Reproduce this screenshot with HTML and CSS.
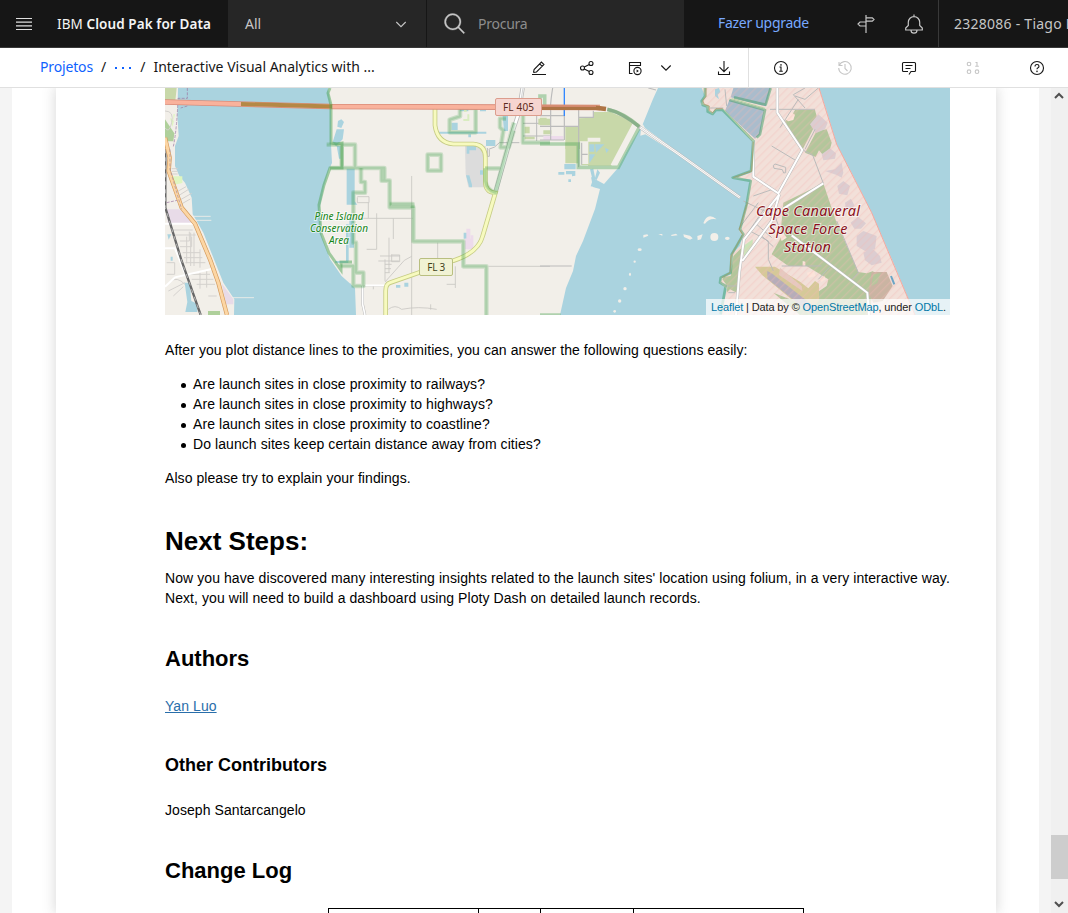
FILE: index.html
```html
<!DOCTYPE html>
<html lang="pt">
<head>
<meta charset="utf-8">
<title>IBM Cloud Pak for Data</title>
<link rel="stylesheet" href="styles.css">
</head>
<body>
<header class="header">
  <div class="brand">
    <svg class="menu" width="16" height="14" viewBox="0 0 16 14"><path d="M0 1.5h16M0 5.1h16M0 8.8h16M0 12.5h16" stroke="#e0e0e0" stroke-width="1.15"/></svg>
    <span class="brand-name">IBM <b>Cloud Pak for Data</b></span>
  </div>
  <div class="scope"><span>All</span>
    <svg width="12" height="8" viewBox="0 0 12 8" fill="none" stroke="#c6c6c6" stroke-width="1.1"><path d="M1.300 2l4.700 4.700L10.700 2"/></svg>
  </div>
  <div class="search">
    <svg width="24" height="24" viewBox="0 0 32 32" fill="#c6c6c6" stroke="#c6c6c6" stroke-width=".4"><path d="M29,27.586l-7.552-7.552a11.018,11.018,0,1,0-1.414,1.414L27.586,29ZM4,13a9,9,0,1,1,9,9A9.01,9.01,0,0,1,4,13Z"/></svg>
    <span>Procura</span>
  </div>
  <span class="upgrade">Fazer upgrade</span>
  <span class="head-icon"><svg width="20" height="20" viewBox="0 0 20 20" fill="none" stroke="#c6c6c6" stroke-width="1.2"><path d="M10 1v18M10 3.800h6.300L18 5.500l-1.700 1.700H10zM10 8H4L2 10l2 2h6"/></svg></span>
  <span class="head-icon"><svg width="20" height="20" viewBox="0 0 20 20" fill="none" stroke="#c6c6c6" stroke-width="1.2"><path d="M10 .5v2M10 2.600a5.700 5.700 0 0 0-5.700 5.700v3.200L1.700 14v2h16.600v-2l-2.600-2.500V8.300A5.700 5.700 0 0 0 10 2.600zM7 16.200a3 3 0 0 0 6 0"/></svg></span>
  <div class="account">2328086 - Tiago P</div>
</header>

<div class="toolbar">
  <nav class="crumbs"><a>Projetos</a><i>/</i><svg class="dots" width="18" height="4" viewBox="0 0 18 4" fill="#0f62fe"><path d="M1 1h2v2H1zM8 1h2v2H8zM15 1h2v2h-2z"/></svg><i>/</i><span>Interactive Visual Analytics with ...</span></nav>
  <div class="actions">
    <span class="act"><svg class="ico" viewBox="0 0 16 16"><path d="M1 14.500h14M2.500 12.500l.600-3L10.400 2.100l2.500 2.500L5.500 12l-3 .500M8.700 3.800l2.500 2.500"/></svg></span>
    <span class="act"><svg class="ico" viewBox="0 0 16 16"><circle cx="12" cy="3.500" r="2"/><circle cx="12" cy="12.500" r="2"/><circle cx="3.500" cy="8" r="2"/><path d="M5.300 7.100l5-2.700M5.300 8.900l5 2.700"/></svg></span>
    <span class="act"><svg class="ico" viewBox="0 0 16 16"><path d="M5.500 13.500h-3v-11h11v3.500M2.500 5.500h11"/><circle cx="10.500" cy="11" r="3.600"/><path d="M9.600 9.600v2.800l2.300-1.400z" fill="#161616" stroke="none"/></svg></span>
    <span class="drop"><svg width="12" height="8" viewBox="0 0 12 8" fill="none" stroke="#161616" stroke-width="1.100"><path d="M1.300 1.500L6 6.200l4.700-4.700"/></svg></span>
    <span class="act"><svg class="ico" viewBox="0 0 16 16"><path d="M8 1v10.500M3.500 7.200L8 11.700l4.500-4.500M2.500 11.500v3h11v-3"/></svg></span>
  </div>
  <div class="panels">
    <span><svg class="ico" viewBox="0 0 16 16"><circle cx="8" cy="8" r="6.500"/><path d="M6.500 7H8v4M6.200 11.300h3.600"/><circle cx="8" cy="4.800" r=".3"/></svg></span>
    <span class="off"><svg class="ico" viewBox="0 0 16 16"><path d="M2 2v3.500h3.500M2.300 5.200A6.300 6.300 0 1 1 1.700 8M8 4v4.500l2.500 2.500"/></svg></span>
    <span><svg class="ico" viewBox="0 0 16 16"><path d="M8 14.500l2-3h3.500q1 0 1-1v-7q0-1-1-1h-11q-1 0-1 1v7q0 1 1 1H7M4.500 5.500h7M4.500 8.500h5"/></svg></span>
    <span class="off"><svg class="ico" viewBox="0 0 16 16"><circle cx="4" cy="4" r="1.800"/><circle cx="4" cy="11.700" r="1.800"/><circle cx="12" cy="11.700" r="1.800"/><path d="M10.500 2.500H12V6M10.200 6.200h3.600"/></svg></span>
    <span><svg class="ico" viewBox="0 0 16 16"><circle cx="8" cy="8" r="6.500"/><path d="M6 6.500q0-2 2-2t2 1.700q0 1-1 1.500-1 .400-1 1.600"/><circle cx="8" cy="11.300" r=".3"/></svg></span>
  </div>
</div>

<div class="viewport">
 <div class="frame">
  <main class="page">
   <div class="map">
    <svg width="785" height="227" viewBox="165 88 785 227">
     <defs>
      <pattern id="hatch" width="17" height="17" patternUnits="userSpaceOnUse" patternTransform="rotate(45)"><path d="M8 0v17" stroke="#f3b9b4" stroke-width="2"/></pattern>
      <path id="cape" d="M35 6L387 6 410 75 440 175 500 290 545 380 610 530 675 687 95 687 110 610 90 590 95 575 125 565 120 510 150 480 158 450 148 435 170 360 182 280 130 277 182 260 190 170 100 70 75 72 68 85 55 75 48 60 32 55 45 30Z"/>
     </defs>
     <rect x="165" y="88" width="785" height="227" fill="#aad3df"/>
     <path fill="#f2efe9" d="M328 88L331 106 331 144 332 163 329 169 324 186 319.500 209 321.600 236 330 259 341.600 276 355 288 356 315 560 315 566 288 573 271 576 256 583 241 595 209 600 189 593 187 591 177 604 184 618 168 636 133 642 126 653 99 658 88Z"/>

     <!-- western shore -->
     <g transform="translate(160 86) scale(.33333)" fill="none">
      <path fill="#f2efe9" d="M15 6H54L52 90 56 150 45 180 45 240 58 270 75 290 95 335 98 385 110 405 130 440 190 590 223 640 222 687H15Z"/>
      <path fill="#aad3df" d="M54 75L82 55V6H54z"/>
      <path fill="#c8d8a9" d="M15 6H50L46 45H15Z"/><path fill="#afd09b" d="M15 100l28 42-3 24H15z"/>
      <path fill="#dff6c0" d="M38 271h29v20l-27 6zM40 85h5l-5 20zM30 95l12 10-5 18z"/><path fill="#e8dbe8" d="M18 370h40l45 43H24zM185 592l35 48v15h-22z"/>
      <path stroke="#d4d1ce" stroke-width="3" d="M15 75q28 0 20 35T15 125M35 248h18M35 256h18M35 264h18M50 318l28-16M54 330l32-20M60 342l35-20M66 353l25-14M38 432h60M45 447h62M60 465h28v-28M60 482h35v-30M68 500h52M72 515h55M76 530h60M80 452v80M92 440v100M102 440v100M120 490v55M80 565h70M95 580h65M110 595h55M120 560v48M140 555v50M20 530h24v35H20M18 600q22-30 45-15t30 35M25 615l50-25M40 630l30-28M145 630h25"/>
      <path stroke="#fff" stroke-width="6" d="M15 413h88M15 487h30l30 75M15 602l30-28 110-25"/>
      <path stroke="#f2efe9" stroke-width="2.500" d="M98 391h54M98 403h56M218 635h64"/>
      <path fill="#aad3df" d="M74 590h15l5 55 18 8v25H76l6-30zM32 512h6v12h-6zM22 445h12l-8 16z"/>
      <path fill="#afd09b" d="M144 675h36v12h-36z"/>
      <path stroke="#9d78a4" stroke-width="3" stroke-dasharray="9 4" opacity=".7" d="M82 6v31H54q-3 90-14 145M82 60l-20 6M20 350l36-8"/>
      <path stroke="#666" stroke-width="7" d="M16 190V365L65 525 122 687"/><path stroke="#ddd" stroke-width="2" stroke-dasharray="12 12" d="M16 190V365L65 525 122 687"/>
      <path stroke="#d49a5c" stroke-width="13" d="M15 155L29 215 26 255 65 365 105 413 150 520 175 590 201 687"/>
      <path stroke="#fcd6a4" stroke-width="9" d="M15 155L29 215 26 255 65 365 105 413 150 520 175 590 201 687"/>
      <path stroke="#a08ca6" stroke-width="2" stroke-dasharray="9 5" d="M30 190v60l35 120"/>
      <g fill="#aad3df"><path d="M534 105l10-5 8 8-8 18-12-4zM530 130h22l-4 30-20 20-10-12zM530 180h12v38h-5zM560 248h24v98l8 10h-32zM568 395h14v90h-14zM558 415h8v110h-8zM525 525h40v6h-40z"/></g>
     </g>

     <!-- Merritt Island -->
     <g transform="translate(350 86) scale(.33333)" fill="none">
      <path fill="#aad3df" d="M0 590l15 30v67H0zM265 137h144v6H265zM305 110h18v22h-18zM330 70h25v6h-25zM390 71h18v5h-18zM408 162h28v18h-28zM458 90h16v45h-12z"/>
      <path fill="#dcdcdc" d="M345 180h62v124h-52l-8-40z"/>
      <path fill="#aad3df" d="M350 178h28v15h-20v10h-8zM348 268h10l8 28v8h-8zM390 253h10v13h-10zM341 440h10v18h-10zM138 597h13v8h-13zM163 590h12v12h-12zM355 145h8v9h-8z"/>
      <path fill="#eddbeb" d="M349 428h12v30h8v32h-24v-32h4zM362 448h8v42h-8z"/>
      <path stroke="#d9ecc0" stroke-width="6" d="M342 75h8M340 102h18M355 85v20"/>
      <path stroke="#c9c7c3" stroke-width="2.500" d="M22 332h35v18H22v-16M55 350v46M15 397h173M80 382v108H50M130 397v62M117 455v105M90 510h60M85 525h62M105 520v65M125 505v22h24v-20h-24M105 535h20M105 548h18M105 560h14M185 270v417M105 588l58-65 22-12M263 470v50M416 541h184M316 541v65M290 595h26M115 670q20-16 40 0 50-10 105 0M242 655v16M40 600h68M70 600v10"/>
      <path stroke="#bbb" stroke-width="8" d="M38 600v55l7 32"/><path stroke="#fff" stroke-width="5" d="M38 600v55l7 32M45 598h70"/>
      <path stroke="#bbb" stroke-width="3" d="M416 190q20-4 32-20h60M412 186v25h6v-20M519 150h81M560 90v75M519 112h81"/>
      <path fill="#c8d8a9" d="M565 98h35v18h-35zM524 122h15v20h-15zM524 152h30v8h-30z"/>
      <path stroke="#bbb" stroke-width="13" d="M518 6L505 85 490 130 436 320"/><path stroke="#fff" stroke-width="8" d="M518 6L505 85 490 130 436 320"/>
      <path stroke="#bbb" stroke-width="2" d="M519 6l-13 80"/>
      <path stroke="#c6cc85" stroke-width="14" d="M255 60V118Q262 170 310 174H370Q406 176 406 215V285Q405 318 436 321L398 450Q385 500 310 524L120 590Q107 594 107 615V687"/>
      <path stroke="#f7fabf" stroke-width="9" d="M255 60V118Q262 170 310 174H370Q406 176 406 215V285Q405 318 436 321L398 450Q385 500 310 524L120 590Q107 594 107 615V687"/>
      <g stroke="#4ba454" stroke-opacity=".22" stroke-width="14" stroke-linejoin="round">
       <path id="reserve-a" d="M-70 176H15v70M-25 176v70M-60 246H103v38h16v80H190v102H340v75H409v146M95 246v38h8M-35 246"/>
       <path id="reserve-b" d="M119 354h69v12M33 246v42h12v32H10v150h8v90h22v40H10v-60H-28"/>
       <path id="reserve-c" d="M233 206h40v48H233zM330 66h47v73h-78v-38l31-10zM405 247h46M492 110L436 320Q410 312 406 285V247M468 98h-18v26l10 10-8 50h24l15-50M519 90v80h81"/>
      </g>
      <g stroke="#4ba454" stroke-opacity=".25" stroke-width="7" stroke-linejoin="round"><use href="#inner"/>
       <path d="M-70 176H15v70M-25 176v70M-60 246H103v38h16v80H190v102H340v75H409v146M95 246v38h8"/>
       <path d="M119 354h69v12M33 246v42h12v32H10v150h8v90h22v40H10v-60H-28"/>
       <path d="M233 206h40v48H233zM330 66h47v73h-78v-38l31-10zM405 247h46M492 110L436 320Q410 312 406 285V247M468 98h-18v26l10 10-8 50h24l15-50M519 90v80h81"/>
      </g>
     </g>

     <!-- eastern shore and causeway -->
     <g transform="translate(540 86) scale(.33333)" fill="none">
      <path fill="#c8d8a9" d="M0 95h20v8l12 15H0zM10 133h24v12H10zM76 122h40v-25l45-2v-17h50l85 35-82 126h-70v-50H76z"/>
      <path fill="#c8d8a9" d="M76 170h40v62H76zM125 170h20v67h-20z"/><path fill="#f2efe9" d="M278 112l24 12-70 120-20-8z"/><path fill="#f2efe9" d="M120 166h25v68h-25zM143 155h38v12h-38z"/>
      <path fill="#aad3df" d="M148 175h15v22h-15zM165 175h28l-25 25zM148 205h18l-18 27zM195 185l12 6-8 10zM73 234h34v16H73zM150 250l10-2 6 30-5 10 22 10-5 8-26-5 6-18zM172 250l8 10-10 22-6-2zM55 258h18v8H55zM78 255h28v14l-10 2v-6H78zM85 280h8v8h-8z"/>
      <path fill="#eddbeb" d="M10 150h60v12H10z"/>
      <path stroke="#bbb" stroke-width="3.500" d="M0 89h72M0 121h115M0 162h72M32 72v90M73 72v90M116 72v172M116 94h44V74M38 6q-8 50-6 65M125 170v66M125 205h18M0 540h95M325 6l23 6"/>
      <path stroke="#4ba454" stroke-opacity=".4" stroke-width="11" d="M0 174h115v70h120l63-120M0 50V30h14v30M0 687h62"/>
      <path fill="#f2efe9" d="M303 128l5-15 7 13 85 62-8 5-76-48-15 4z"/>
      <path stroke="#bbb" stroke-width="10" d="M202 70Q240 76 300 124L415 203 600 335"/><path stroke="#fff" stroke-width="7" d="M300 124L415 203 600 335"/><path stroke="#b9b5b0" stroke-width="1.500" d="M300 124L415 203 600 335"/>
      <path stroke="#68a968" stroke-opacity=".6" stroke-width="11" d="M202 70Q250 80 298 122"/>
      <path stroke="#3388ff" stroke-width="4" d="M73 6V90"/>
      <g fill="#f2efe9"><path d="M490 412q12-35 40-12-22-5-35 13zM310 447l12-2 3 4-15 6zM355 444h12v5zM393 447l15-4 5 5-18 2zM430 445l20 4 8 8-8 4-18-8zM472 450l16-5-5 15-10 3z"/><ellipse cx="523" cy="453" rx="12" ry="12"/><ellipse cx="562" cy="457" rx="7" ry="5"/><ellipse cx="299" cy="491" rx="6" ry="4"/><circle cx="284" cy="527" r="3.500"/><ellipse cx="270" cy="565" rx="3" ry="5"/><circle cx="255" cy="608" r="5"/><circle cx="239" cy="645" r="5"/><circle cx="224" cy="676" r="4"/></g>
     </g>

     <!-- trunk road -->
     <g fill="none"><path d="M165 102L330 106.500 600 107.500" stroke="#d98b79" stroke-width="5.600"/><path d="M165 102L330 106.500 600 107.500" stroke="#f9b29c" stroke-width="3.800"/>
      <path d="M241 104L332 106.500" stroke="#b48846" stroke-width="4"/><path d="M542 107.700H596L606 109" stroke="#ae7445" stroke-width="4.500"/><path d="M542 106.200H596" stroke="#e0917c" stroke-width="1.200"/>
      <path stroke="#4ba454" stroke-opacity=".5" stroke-width="3" d="M330 88l-2 5 3 12v38l6 1 5-1v25h-12l-6 17-5 20 2 28 8 20 12 17v-8h11"/>
     </g>

     <!-- Cape Canaveral -->
     <g transform="translate(690 86) scale(.33333)" fill="none">
      <use href="#cape" fill="#f2e0d9"/>
      <path fill="#b3c69b" d="M122 570l8-60 24-24-4 54-10 80-20-10-10 10 2-20-15-20 5-8 20-2z"/>
      <path fill="#aabccc" d="M130 6H242l-15 55-105-27zM118 42L222 72 210 145 195 158 105 75z"/>
      <path fill="#aad3df" d="M75 10l12-4 4 12-8 8 4 14-12-10z"/>
      <path fill="#b3c69b" d="M315 72h60l8 30-20 40-25 48-45-70-8-15 20-15zM345 200l35-65 30-5 15 40-8 30-20 5-10-12-10 20zM400 292L438 405 505 558 530 562 550 555 545 630 540 687H330L250 620 300 640 380 620 410 600 415 580 350 540 295 540 245 505 270 460 280 350z"/>
      <path fill="#cab4a2" d="M545 558h45l18 42-30 45-28 5-15-28z"/><path fill="#b3c69b" d="M550 565l22-4-10 30-18 10z"/>
      <path fill="#bfe5b0" d="M160 480l28-20v30l-25 30z" opacity=".8"/>
      <g fill="#dccdd1"><path d="M360 115l25-30 28 25-8 20-28 12zM395 205l25-18 18 15-3 16-35 5zM405 255l30-5 20-20 5 30-5 15-15-8zM442 300l18-15 20 15-8 28-25-5zM465 350l18-12 10 20-10 15h-15zM482 410l22-18 24 20-15 16h-20zM500 450l20-15 40 15-5 40-30 5-25-15zM520 500l25-15 25 25 5 20-30 8-20-15z"/></g>
      <path fill="#d5c998" d="M195 542h60l75 45 25 20 20-22 12 8v50l-30 40-140-115z"/><path fill="#b6adb9" d="M232 555l15 8 130 102-15 18-130-105z"/><path fill="#e6c9c0" d="M270 545l65 55 2 15-70-48z"/>
      <path fill="#fce4da" d="M265 440h15l10 15-15 10zM350 560l22-5 5 15-20 5zM388 580l15-10 4 10-12 8zM338 525l8 2v15h-8zM283 98l20-20 12 8-5 16-15 4z"/>
      <use href="#cape" fill="url(#hatch)" opacity=".65"/>
      <path stroke="#bbb" stroke-width="3" d="M240 70H375M345 6l-35 20 35 40M315 30l30 10 40-34M325 40l-55 85M375 130l-30 60M338 192l30 15 32 85M440 405l65 155-20 22M245 180l70 42M250 238l5-4 32 10v16l-6 1-4-10-25-4zM160 345l95 45 10 28M180 435l55 30v55l15 35M200 415l45 40M215 450l35 32M385 580l35-38M275 540h120M190 330l58-20M205 350l-60 80M225 365l-65 95M110 600h30M115 620h20M105 10l5 50M60 66h40"/>
      <path stroke="#bbb" stroke-width="9" d="M262 6V80L337 192 265 322 190 272V162M268 325L162 460 148 560 138 687M268 325L245 405 157 525M280 368L400 292M305 448L532 620 537 687"/>
      <path stroke="#fff" stroke-width="6" d="M262 6V80L337 192 265 322 190 272V162M268 325L162 460 148 560 138 687M268 325L245 405 157 525M280 368L400 292M305 448L532 620 537 687"/>
      <g stroke="#409f67" stroke-opacity=".5" stroke-width="8" stroke-linejoin="round"><path d="M45 6v25L35 45l3 12 15 5v15l15 7 10-12h20L190 165 183 255 128 275 182 285 170 355 150 430l10 15-35 60-3 55-30 15-2 15 17 10-15 85"/><path d="M242 6l-15 50-95-22M118 42L225 72 210 145l-10 10"/></g>
      <path stroke="#b7d3a4" stroke-width="3" d="M100 70L190 165M125 38L225 67"/>
      <path stroke="#ac9560" stroke-width="2" d="M190 167l-5 88-55 20M172 350l-24 80 10 15-35 65-3 50-25 15M48 6v25L38 43l5 12 15 5v13l10 7 10-12h20"/>
      <path stroke="#f3a9a0" stroke-width="3" d="M387 6L440 175 545 380 675 687"/><path stroke="#69a4c5" stroke-width="6" d="M603 570l10 25"/>
     </g>

     <g class="shield"><rect x="495.500" y="98.500" width="46" height="17" rx="1.500" fill="#f6d5d0" stroke="#dc9d8d"/><text x="518.500" y="111" fill="#5c2b20" textLength="31">FL 405</text>
      <rect x="419.500" y="258.500" width="33" height="17" rx="1.500" fill="#f1f2d4" stroke="#b9bf80"/><text x="436.200" y="271" fill="#43451c" textLength="18">FL 3</text></g>
     <g class="reserve"><text x="339" y="220" textLength="49">Pine Island</text><text x="339" y="232" textLength="58">Conservation</text><text x="339" y="244" textLength="20">Area</text></g>
     <g class="station"><text x="808" y="216" textLength="104">Cape Canaveral</text><text x="808" y="234" textLength="79">Space Force</text><text x="807.500" y="252" textLength="47">Station</text></g>
    </svg>
    <div class="credit"><a>Leaflet</a> | Data by © <a>OpenStreetMap</a>, under <a>ODbL</a>.</div>
   </div>

   <p class="lead">After you plot distance lines to the proximities, you can answer the following questions easily:</p>
   <ul class="questions">
    <li>Are launch sites in close proximity to railways?</li>
    <li>Are launch sites in close proximity to highways?</li>
    <li>Are launch sites in close proximity to coastline?</li>
    <li>Do launch sites keep certain distance away from cities?</li>
   </ul>
   <p>Also please try to explain your findings.</p>
   <h1>Next Steps:</h1>
   <p class="next">Now you have discovered many interesting insights related to the launch sites' location using folium, in a very interactive way. Next, you will need to build a dashboard using Ploty Dash on detailed launch records.</p>
   <h2 class="authors">Authors</h2>
   <p><a class="author">Yan Luo</a></p>
   <h3>Other Contributors</h3>
   <p>Joseph Santarcangelo</p>
   <h2 class="log-title">Change Log</h2>
   <div class="log"><span></span><span></span><span></span><span></span></div>
  </main>
 </div>
 <div class="scrollbar">
  <svg width="11" height="7" viewBox="0 0 11 7" fill="none" stroke="#505050" stroke-width="2"><path d="M1 6l4-4 4 4"/></svg>
  <div class="thumb"></div>
  <svg width="11" height="7" viewBox="0 0 11 7" fill="none" stroke="#505050" stroke-width="2"><path d="M1 1l4 4 4-4"/></svg>
 </div>
</div>
</body>
</html>
```
FILE: styles.css
```css
* { box-sizing: border-box; }
body { margin: 0; height: 913px; overflow: hidden; background: #fff; color: #000; font: 14px/20px "Liberation Sans", Arial, sans-serif; }
p, h1, h2, h3, ul { margin: 0; }

.header { display: flex; align-items: stretch; height: 48px; overflow: hidden; background: #161616; border-bottom: 1px solid #393939; color: #c6c6c6; font: 14px/46px "Noto Sans", sans-serif; white-space: nowrap; }
.header > * { flex-shrink: 0; }
.brand { display: flex; align-items: center; width: 228px; padding-left: 16px; color: #f4f4f4; }
.menu { margin-right: 25px; }
.brand-name { font-size: 13.500px; letter-spacing: .09px; }
.brand-name b { font-weight: 600; }
.scope { display: flex; align-items: center; justify-content: space-between; width: 199px; padding: 1px 19px 0 17px; background: #262626; border-right: 1px solid #161616; }
.search { display: flex; align-items: center; gap: 11px; width: 257px; padding-left: 16px; background: #262626; color: #8d8d8d; letter-spacing: -.25px; }
.upgrade { width: 158px; padding-left: 34px; color: #78a9ff; letter-spacing: -.3px; }
.head-icon { display: flex; align-items: center; justify-content: center; width: 48px; padding-top: 1px; }
.account { width: 130px; padding-left: 15px; border-left: 1px solid #393939; line-height: 48px; letter-spacing: .25px; }

.toolbar { display: flex; height: 40px; overflow: hidden; border-bottom: 1px solid #e0e0e0; background: #fff; color: #161616; }
.crumbs { display: flex; align-items: center; width: 515px; flex: none; padding-left: 40px; font: 14px/37px "Noto Sans", sans-serif; white-space: nowrap; padding-bottom: 2px; }
.crumbs a { color: #0f62fe; letter-spacing: -.15px; }
.crumbs i { font-style: normal; margin: 0 8px; }
.dots { position: relative; top: 1px; }
.actions { display: flex; align-items: center; width: 234px; flex: none; border-right: 1px solid #e0e0e0; padding-top: 1px; }
.act { display: flex; justify-content: center; width: 48px; flex: none; }
.drop { display: flex; justify-content: center; width: 16px; margin-right: 27px; }
.ico { width: 16px; height: 16px; fill: none; stroke: #161616; stroke-width: 1.100; }
.panels { display: flex; align-items: center; }
.panels span { display: flex; justify-content: center; width: 64px; flex: none; padding-bottom: 0; }
.off .ico { stroke: #c6c6c6; }

.viewport { display: flex; height: 825px; overflow: hidden; background: #f4f4f4; padding-left: 12px; }
.frame { width: 1027px; margin-right: 12px; padding: 0 43px 0 44px; background: #fff; flex: none; overflow: hidden; }
.page { height: 825px; overflow: hidden; padding-left: 109px; background: #fff; box-shadow: 0 0 12px 1px rgba(87, 87, 87, .22); }
.map { position: relative; width: 785px; height: 227px; overflow: hidden; margin-bottom: 25px; }
.map svg { display: block; }
.credit { position: absolute; right: 0; bottom: 0; width: 244px; height: 16px; padding: 0 5px; background: rgba(255, 255, 255, .7); color: #222; font-size: 11px; line-height: 16px; white-space: nowrap; letter-spacing: -.13px; }
.credit a { color: #0078a8; }
.shield, .reserve, .station { font-family: "Noto Sans", sans-serif; text-anchor: middle; }
.shield { font-size: 10px; }
.reserve { font-size: 10px; font-style: italic; fill: #178517; stroke: #fff; stroke-opacity: .6; stroke-width: 2px; paint-order: stroke; }
.station { font-size: 14.500px; font-style: italic; fill: #8b1020; stroke: #fff; stroke-opacity: .6; stroke-width: 2px; paint-order: stroke; }

p, li { letter-spacing: .07px; }
.lead { margin-bottom: 14px; }
.questions { padding-left: 16px; margin-bottom: 14px; list-style: none; }
.questions li { display: flex; align-items: center; }
.questions li::before { content: ""; width: 5px; height: 5px; margin: 2px 7px 0 0; border-radius: 50%; background: #000; }
h1 { margin: 40px 0 14px; font-size: 26px; line-height: 26px; }
h2 { font-size: 22px; line-height: 22px; }
.next { width: 800px; letter-spacing: .076px; }
.authors { margin: 40px 0 26px; }
.author { color: #296eaa; text-decoration: underline; }
h3 { margin: 40px 0 26px; font-size: 18px; line-height: 18px; }
.log-title { margin: 40px 0 26px; }
.log { display: grid; grid-template-columns: 150px 62px 93px 170px; width: 476px; height: 30px; margin-left: 163px; border: 1px solid #000; border-right: 0; }
.log span { border-right: 1px solid #000; }

.scrollbar { display: flex; flex-direction: column; align-items: center; width: 17px; flex: none; padding: 4px 0; background: #f0f0f0; }
.thumb { width: 17px; height: 44px; margin: 736px 0 22px; background: #cdcdcd; flex: none; }
```
